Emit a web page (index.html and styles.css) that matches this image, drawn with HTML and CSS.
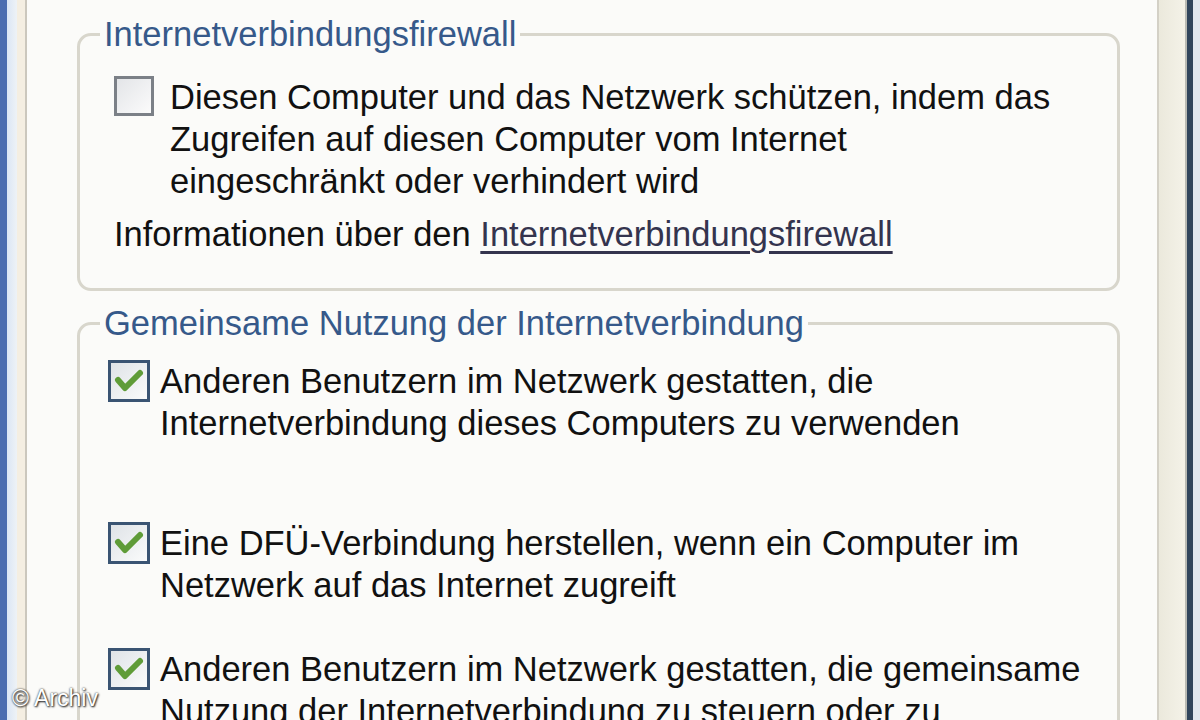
FILE: index.html
```html
<!DOCTYPE html>
<html lang="de">
<head>
<meta charset="utf-8">
<title>Erweitert</title>
<link rel="stylesheet" href="styles.css">
</head>
<body>
<div class="window">
  <div class="frame-left">
    <span class="fl-blue"></span><span class="fl-light"></span><span class="fl-beige"></span><span class="fl-line"></span>
  </div>
  <div class="content">
    <fieldset class="group group-fw">
      <legend>Internetverbindungsfirewall</legend>
      <div class="option option-fw">
        <span class="cb cb-off"></span>
        <p>Diesen Computer und das Netzwerk schützen, indem das<br>Zugreifen auf diesen Computer vom Internet<br>eingeschränkt oder verhindert wird</p>
      </div>
      <p class="info">Informationen über den <a class="link" href="#">Internetverbindungsfirewall</a></p>
    </fieldset>
    <fieldset class="group group-ics">
      <legend>Gemeinsame Nutzung der Internetverbindung</legend>
      <div class="option option-ics opt-1">
        <span class="cb cb-on"><svg viewBox="0 0 36 36" width="36" height="36"><path d="M7 17 L14 25 L29 10" fill="none" stroke="#5f9c38" stroke-width="6" stroke-linecap="round" stroke-linejoin="round"/></svg></span>
        <p>Anderen Benutzern im Netzwerk gestatten, die<br>Internetverbindung dieses Computers zu verwenden</p>
      </div>
      <div class="option option-ics opt-2">
        <span class="cb cb-on"><svg viewBox="0 0 36 36" width="36" height="36"><path d="M7 17 L14 25 L29 10" fill="none" stroke="#5f9c38" stroke-width="6" stroke-linecap="round" stroke-linejoin="round"/></svg></span>
        <p>Eine DFÜ-Verbindung herstellen, wenn ein Computer im<br>Netzwerk auf das Internet zugreift</p>
      </div>
      <div class="option option-ics opt-3">
        <span class="cb cb-on"><svg viewBox="0 0 36 36" width="36" height="36"><path d="M7 17 L14 25 L29 10" fill="none" stroke="#5f9c38" stroke-width="6" stroke-linecap="round" stroke-linejoin="round"/></svg></span>
        <p>Anderen Benutzern im Netzwerk gestatten, die gemeinsame<br>Nutzung der Internetverbindung zu steuern oder zu</p>
      </div>
    </fieldset>
  </div>
  <div class="frame-right">
    <span class="fr-line"></span><span class="fr-beige"></span><span class="fr-gray"></span><span class="fr-dark"></span><span class="fr-light"></span>
  </div>
  <div class="watermark">© Archiv</div>
</div>
</body>
</html>
```
FILE: styles.css
```css
html, body {
  margin: 0;
  padding: 0;
}
body {
  width: 1200px;
  height: 720px;
  overflow: hidden;
  background: #fbfbf9;
  font-family: "Liberation Sans", Arial, sans-serif;
  color: #111111;
}
.window {
  position: relative;
  display: flex;
  width: 1200px;
  height: 720px;
  overflow: hidden;
}
.frame-left, .frame-right {
  display: flex;
  flex: none;
  height: 100%;
}
.frame-left span, .frame-right span {
  display: block;
  height: 100%;
}
.fl-blue { width: 7px; background: #4b6db0; }
.fl-light { width: 10px; background: linear-gradient(90deg, #dbe6f5, #eef2f6); }
.fl-beige { width: 8px; background: #f4eee2; }
.fl-line { width: 2px; background: #cbc7bd; }

.fr-line { width: 2px; background: #d3d0c6; }
.fr-beige { width: 26px; background: linear-gradient(90deg, #ebe9dc, #f4f2e8); }
.fr-gray { width: 2px; background: #b9bab3; }
.fr-dark { width: 6px; background: #31455c; }
.fr-light { width: 7px; background: #e1e7ef; }

.content {
  flex: 1;
  min-width: 0;
  background: #fbfbf9;
}

.group {
  margin: 11px 37px 0 50px;
  padding: 0 0 33px 0;
  border: 3px solid #d8d6cc;
  border-radius: 14px;
  min-width: 0;
}
.group-fw {
  margin-top: 13px;
}
.group legend {
  margin-left: 20px;
  padding: 0 4px;
  font-size: 34.5px;
  line-height: 42px;
  color: #36598a;
}

.option {
  display: flex;
  align-items: flex-start;
}
.option p {
  margin: 0;
  font-size: 34.5px;
  line-height: 42px;
}
.option-fw {
  margin: 21px 0 0 34px;
}
.option-fw p {
  margin-left: 16px;
}
.option-ics {
  margin-left: 28px;
}
.option-ics p {
  margin-left: 10px;
}
.opt-1 { margin-top: 16px; }
.opt-2 { margin-top: 78px; }
.opt-3 { margin-top: 42px; }

.cb {
  flex: none;
  box-sizing: border-box;
  display: flex;
  align-items: center;
  justify-content: center;
}
.cb-off {
  width: 40px;
  height: 40px;
  border: 3px solid #7b8087;
  background: linear-gradient(135deg, #e3e5e8, #fbfbfb);
}
.cb-on {
  width: 42px;
  height: 42px;
  border: 3px solid #3a5473;
  background: linear-gradient(135deg, #dfe3e7, #fafbfb);
}
.cb-on svg {
  display: block;
}

.info {
  margin: 11px 0 0 34px;
  font-size: 34.5px;
  line-height: 42px;
}
.link {
  color: #34344e;
  text-decoration: underline;
  text-decoration-thickness: 3px;
  text-underline-offset: 5px;
}

.watermark {
  position: absolute;
  left: 12px;
  top: 685px;
  font-size: 23px;
  line-height: 26px;
  color: #ffffff;
  text-shadow: 0 0 2px #222, 1px 1px 2px #222;
}
```
